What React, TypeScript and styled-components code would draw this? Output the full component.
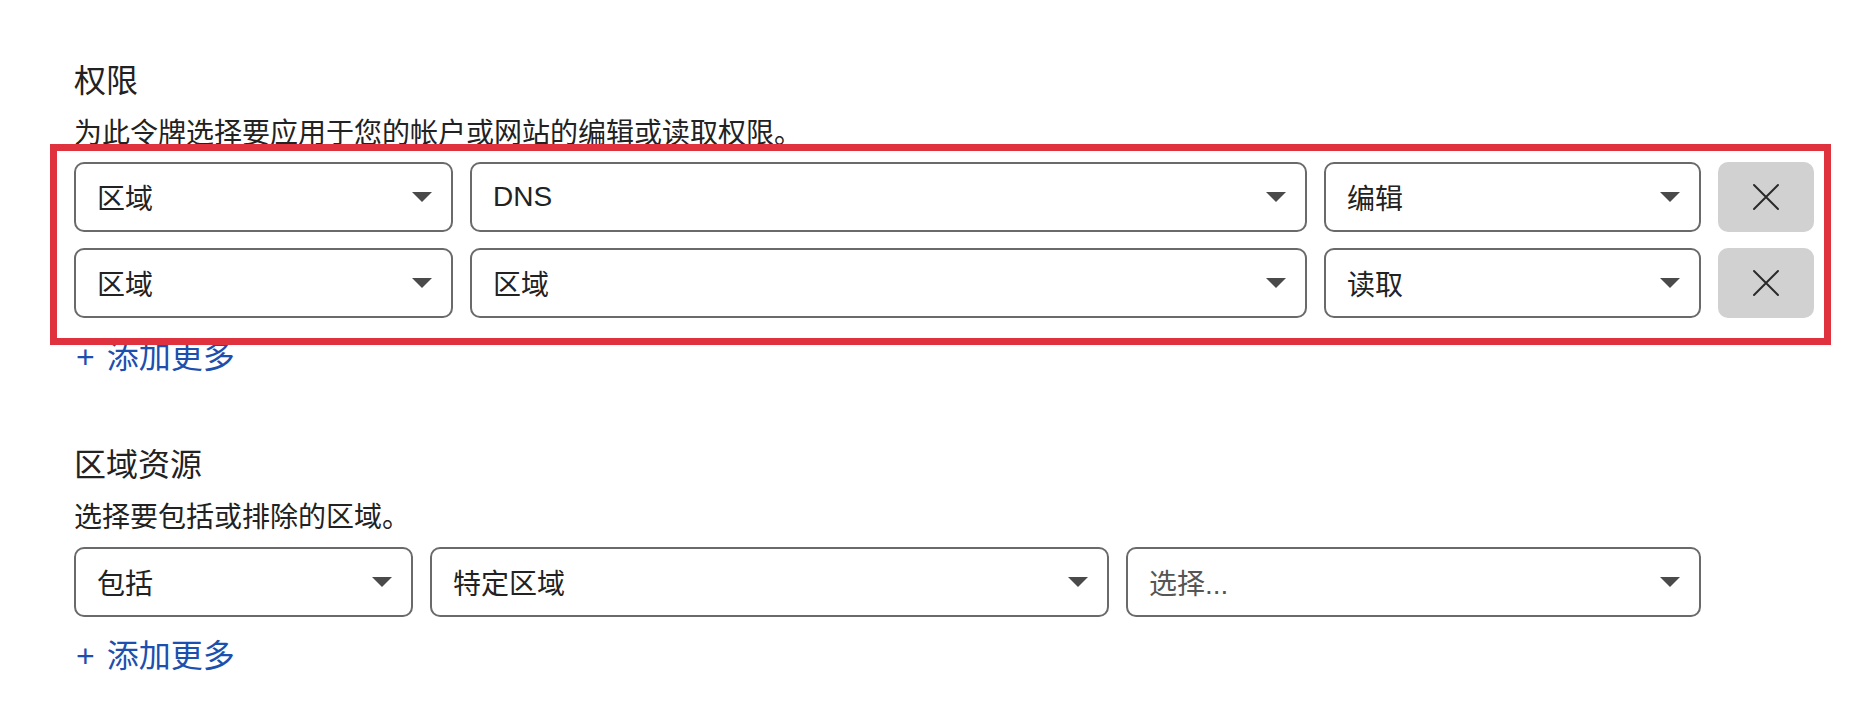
import React from "react";
import styled, { createGlobalStyle } from "styled-components";

const GlobalStyle = createGlobalStyle`
  html, body {
    margin: 0;
    padding: 0;
    background: #ffffff;
  }
  body {
    font-family: "Liberation Sans", "Noto Sans CJK SC", sans-serif;
    color: #1f1f1f;
  }
`;

const Page = styled.main`
  padding: 61px 0 0 74px;
  width: 1852px;
  height: 702px;
  box-sizing: border-box;
  overflow: hidden;
`;

const Section = styled.section<{ $gapTop?: number }>`
  display: flex;
  flex-direction: column;
  margin-top: ${(p) => p.$gapTop ?? 0}px;
`;

const Title = styled.h2`
  margin: 0;
  font-size: 32px;
  font-weight: 400;
  line-height: 40px;
  color: #222222;
`;

const Description = styled.p`
  margin: 13px 0 0;
  font-size: 28px;
  line-height: 40px;
  color: #222222;
`;

const Rows = styled.div<{ $gapTop: number }>`
  position: relative;
  display: flex;
  flex-direction: column;
  gap: 16px;
  margin-top: ${(p) => p.$gapTop}px;
`;

const Highlight = styled.div`
  position: absolute;
  left: -24px;
  top: -18px;
  right: 21px;
  bottom: -27px;
  border: 7px solid #e0313e;
  pointer-events: none;
`;

const Row = styled.div<{ $cols: string }>`
  display: grid;
  grid-template-columns: ${(p) => p.$cols};
  column-gap: 17px;
  height: 70px;
`;

const SelectBox = styled.div<{ $placeholder?: boolean }>`
  display: flex;
  align-items: center;
  justify-content: space-between;
  box-sizing: border-box;
  height: 100%;
  padding: 0 19px 0 21px;
  border: 2px solid #6a6a6a;
  border-radius: 10px;
  background: #ffffff;
  font-size: 28px;
  color: ${(p) => (p.$placeholder ? "#555555" : "#222222")};
`;

const Caret = styled.span`
  width: 0;
  height: 0;
  border-left: 10px solid transparent;
  border-right: 10px solid transparent;
  border-top: 10px solid #4a4a4a;
`;

const RemoveButton = styled.button`
  display: flex;
  align-items: center;
  justify-content: center;
  border: none;
  border-radius: 10px;
  background: #d1d1d1;
  padding: 0;
  cursor: pointer;
`;

const AddMore = styled.a<{ $gapTop: number }>`
  display: flex;
  align-items: center;
  gap: 12px;
  margin-top: ${(p) => p.$gapTop}px;
  font-size: 32px;
  line-height: 40px;
  color: #1d4fae;
  text-decoration: none;
  cursor: pointer;
`;

const Plus = styled.span`
  font-size: 32px;
  font-weight: 300;
  margin-left: 2px;
`;

const Select = ({ value, placeholder }: { value: string; placeholder?: boolean }) => (
  <SelectBox $placeholder={placeholder}>
    <span>{value}</span>
    <Caret />
  </SelectBox>
);

const CloseIcon = () => (
  <svg width="28" height="28" viewBox="0 0 28 28" fill="none">
    <path d="M2 2 L26 26 M26 2 L2 26" stroke="#2a2a2a" strokeWidth="2" strokeLinecap="round" />
  </svg>
);

const permissionRows = [
  ["区域", "DNS", "编辑"],
  ["区域", "区域", "读取"],
];

export default function App() {
  return (
    <>
      <GlobalStyle />
      <Page>
        <Section>
          <Title>权限</Title>
          <Description>为此令牌选择要应用于您的帐户或网站的编辑或读取权限。</Description>
          <Rows $gapTop={8}>
            {permissionRows.map((r, i) => (
              <Row key={i} $cols="379px 837px 377px 96px">
                <Select value={r[0]} />
                <Select value={r[1]} />
                <Select value={r[2]} />
                <RemoveButton aria-label="删除">
                  <CloseIcon />
                </RemoveButton>
              </Row>
            ))}
            <Highlight />
          </Rows>
          <AddMore $gapTop={19}>
            <Plus>+</Plus>
            <span>添加更多</span>
          </AddMore>
        </Section>
        <Section $gapTop={68}>
          <Title>区域资源</Title>
          <Description>选择要包括或排除的区域。</Description>
          <Rows $gapTop={9}>
            <Row $cols="339px 679px 575px">
              <Select value="包括" />
              <Select value="特定区域" />
              <Select value="选择..." placeholder />
            </Row>
          </Rows>
          <AddMore $gapTop={19}>
            <Plus>+</Plus>
            <span>添加更多</span>
          </AddMore>
        </Section>
      </Page>
    </>
  );
}
